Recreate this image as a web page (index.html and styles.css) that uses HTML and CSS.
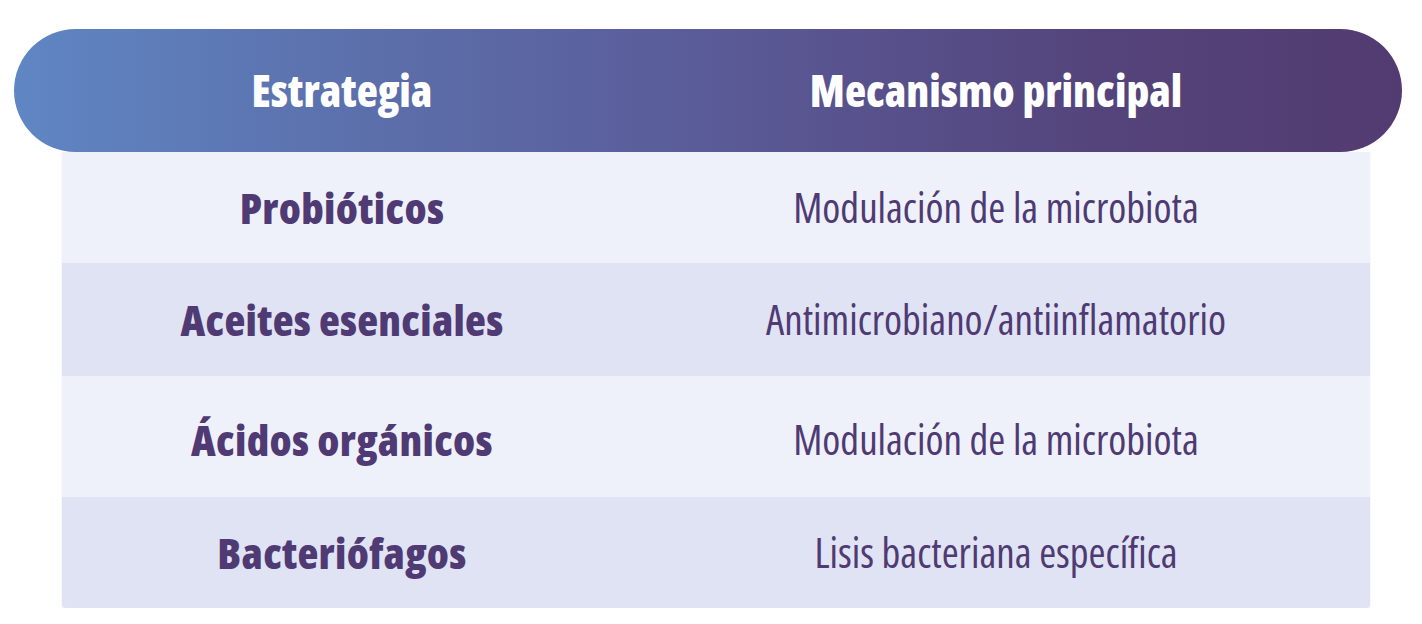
FILE: index.html
```html
<!DOCTYPE html>
<html lang="es">
<head>
<meta charset="utf-8">
<title>Estrategias</title>
<link rel="stylesheet" href="styles.css">
</head>
<body>
<div class="table">
  <div class="head">
    <div class="cell">Estrategia</div>
    <div class="cell">Mecanismo principal</div>
  </div>
  <div class="rows">
    <div class="row light r1">
      <div class="cell name">Probióticos</div>
      <div class="cell desc">Modulación de la microbiota</div>
    </div>
    <div class="row alt r2">
      <div class="cell name">Aceites esenciales</div>
      <div class="cell desc">Antimicrobiano/antiinflamatorio</div>
    </div>
    <div class="row light r3">
      <div class="cell name">Ácidos orgánicos</div>
      <div class="cell desc">Modulación de la microbiota</div>
    </div>
    <div class="row alt r4">
      <div class="cell name">Bacteriófagos</div>
      <div class="cell desc">Lisis bacteriana específica</div>
    </div>
  </div>
</div>
</body>
</html>
```
FILE: styles.css
```css
html, body {
  margin: 0;
  padding: 0;
  background: #ffffff;
}
body {
  font-family: "Open Sans", "Noto Sans", sans-serif;
  font-stretch: 75%;
  color: #4f3a74;
}
.table {
  padding-top: 29px;
  width: 1422px;
}
.head {
  margin-left: 14px;
  width: 1388px;
  height: 123px;
  box-sizing: border-box;
  padding-left: 48px;
  border-radius: 62px;
  background: linear-gradient(90deg, #5f86c3 0%, #5c72ae 22%, #5a5b98 50%, #54447b 78%, #523b70 100%);
  display: grid;
  grid-template-columns: 560px 748px;
  align-items: center;
  color: #ffffff;
  font-weight: 800;
  font-size: 43.5px;
  position: relative;
  z-index: 1;
}
.cell {
  text-align: center;
  white-space: nowrap;
  line-height: 1;
}
.rows {
  margin-left: 62px;
  width: 1308px;
  border-radius: 0 0 4px 4px;
  overflow: hidden;
  box-shadow: 0 1px 2px rgba(80, 80, 140, 0.12);
}
.row {
  display: grid;
  grid-template-columns: 560px 748px;
  align-items: center;
}
.light { background: #eef1f9; }
.alt { background: #e0e3f3; }
.r1 { height: 111px; }
.r2 { height: 113px; }
.r3 { height: 121px; padding-top: 6px; box-sizing: border-box; }
.r4 { height: 111px; }
.name {
  font-weight: 800;
  font-size: 43px;
  letter-spacing: 0.3px;
}
.desc {
  font-weight: 400;
  font-size: 41px;
}
```
